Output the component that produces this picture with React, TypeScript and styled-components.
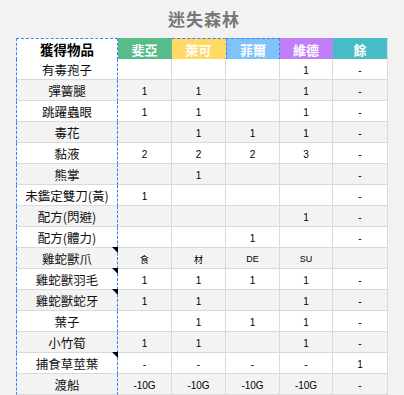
import React from "react";
import styled, { createGlobalStyle, css } from "styled-components";

const Global = createGlobalStyle`
  html, body { margin: 0; padding: 0; background: #f2f2f2; }
  body { font-family: "Liberation Sans", Arial, "Noto Sans CJK TC", sans-serif; }
`;

const DASH = "1px dashed #3d7ef5";
const GRID = "#dadada";

const Page = styled.div`
  width: 404px;
  height: 395px;
  overflow: hidden;
  background: #f2f2f2;
  display: flex;
  flex-direction: column;
`;

const Title = styled.h1`
  margin: 0;
  height: 39px;
  display: flex;
  align-items: center;
  justify-content: center;
  padding-left: 4px;
  padding-bottom: 1px;
  box-sizing: border-box;
  font-family: "Noto Sans CJK TC", sans-serif;
  font-size: 17px;
  font-weight: 700;
  color: #777777;
  letter-spacing: 1px;
`;

const Sheet = styled.div`
  margin-left: 16px;
  width: 372px;
  display: flex;
  flex-direction: column;
`;

const RowGrid = styled.div<{ $bg: string }>`
  display: grid;
  grid-template-columns: 102px 54px 54px 54px 53px 55px;
  height: 21px;
  background: ${(p) => p.$bg};
`;

const cellBase = css`
  box-sizing: border-box;
  display: flex;
  align-items: center;
  justify-content: center;
  white-space: nowrap;
`;

const ItemHead = styled.div`
  ${cellBase}
  background: #ffffff;
  color: #000;
  font-family: "Noto Sans CJK TC", sans-serif;
  font-weight: 700;
  font-size: 13.5px;
  border: ${DASH};
`;

const HeadCell = styled.div<{ $bg: string; $dashTop?: boolean; $dashBottom?: boolean; $dashSides?: boolean; $last?: boolean }>`
  ${cellBase}
  background: ${(p) => p.$bg};
  color: #ffffff;
  font-family: "Noto Sans CJK TC", sans-serif;
  font-weight: 700;
  font-size: 13px;
  border-top: 1px solid ${(p) => p.$bg};
  border-bottom: 1px solid ${(p) => p.$bg};
  border-right: 1px solid ${(p) => (p.$last ? GRID : p.$bg)};
  ${(p) => p.$dashTop && css`border-top: ${DASH};`}
  ${(p) => p.$dashBottom && css`border-bottom: ${DASH};`}
  ${(p) => p.$dashSides && css`border-left: ${DASH}; border-right: ${DASH};`}
`;

const NameCell = styled.div<{ $note: boolean }>`
  ${cellBase}
  position: relative;
  font-family: "Noto Sans CJK TC", sans-serif;
  font-size: 12.5px;
  color: #111;
  border-left: ${DASH};
  border-right: ${DASH};
  border-bottom: 1px solid ${GRID};
  padding-top: 1px;
  ${(p) =>
    p.$note &&
    css`
      &::after {
        content: "";
        position: absolute;
        top: -1px;
        right: -1px;
        width: 0;
        height: 0;
        border-top: 6px solid #000;
        border-left: 6px solid transparent;
      }
    `}
`;

const ValCell = styled.div<{ $small?: boolean }>`
  ${cellBase}
  font-family: "Liberation Sans", Arial, "Noto Sans CJK TC", sans-serif;
  font-size: ${(p) => (p.$small ? "9px" : "10px")};
  color: #000;
  padding-top: 2px;
  border-right: 1px solid ${GRID};
  border-bottom: 1px solid ${GRID};
`;

const headers = [
  { name: "斐亞", bg: "#57bb8a" },
  { name: "萊可", bg: "#ffd966", dashTop: true, dashBottom: true },
  { name: "菲爾", bg: "#80c3fb", dashTop: true, dashBottom: true, dashSides: true },
  { name: "維德", bg: "#c27ef6" },
  { name: "餘", bg: "#46bdc6", last: true },
];

type R = { name: string; vals: string[]; note?: boolean; small?: boolean };

const rows: R[] = [
  { name: "有毒孢子", vals: ["", "", "", "1", "-"] },
  { name: "彈簧腿", vals: ["1", "1", "", "1", "-"] },
  { name: "跳躍蟲眼", vals: ["1", "1", "", "1", "-"] },
  { name: "毒花", vals: ["", "1", "1", "1", "-"] },
  { name: "黏液", vals: ["2", "2", "2", "3", "-"] },
  { name: "熊掌", vals: ["", "1", "", "", "-"] },
  { name: "未鑑定雙刀(黃)", vals: ["1", "", "", "", "-"] },
  { name: "配方(閃避)", vals: ["", "", "", "1", "-"] },
  { name: "配方(體力)", vals: ["", "", "1", "", "-"] },
  { name: "雞蛇獸爪", vals: ["食", "材", "DE", "SU", ""], note: true, small: true },
  { name: "雞蛇獸羽毛", vals: ["1", "1", "1", "1", "-"], note: true },
  { name: "雞蛇獸蛇牙", vals: ["1", "1", "", "1", "-"], note: true },
  { name: "葉子", vals: ["", "1", "1", "1", "-"] },
  { name: "小竹筍", vals: ["1", "1", "", "1", "-"] },
  { name: "捕食草莖葉", vals: ["-", "-", "-", "-", "1"], note: true },
  { name: "渡船", vals: ["-10G", "-10G", "-10G", "-10G", "-"] },
];

export default function App() {
  return (
    <Page>
      <Global />
      <Title>迷失森林</Title>
      <Sheet>
        <RowGrid $bg="#ffffff">
          <ItemHead>獲得物品</ItemHead>
          {headers.map((h) => (
            <HeadCell
              key={h.name}
              $bg={h.bg}
              $dashTop={h.dashTop}
              $dashBottom={h.dashBottom}
              $dashSides={h.dashSides}
              $last={h.last}
            >
              {h.name}
            </HeadCell>
          ))}
        </RowGrid>
        {rows.map((r, i) => (
          <RowGrid key={r.name} $bg={i % 2 === 1 ? "#f3f3f3" : "#ffffff"}>
            <NameCell $note={!!r.note}>{r.name}</NameCell>
            {r.vals.map((v, j) => (
              <ValCell key={j} $small={r.small}>
                {v}
              </ValCell>
            ))}
          </RowGrid>
        ))}
      </Sheet>
    </Page>
  );
}
